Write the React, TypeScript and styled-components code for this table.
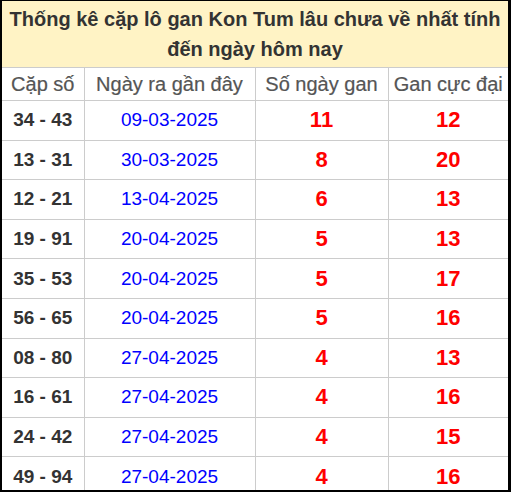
import React from 'react';
import styled, { createGlobalStyle } from 'styled-components';

const GlobalStyle = createGlobalStyle`
  html, body {
    margin: 0;
    padding: 0;
    background: #fff;
  }
  body {
    font-family: "Liberation Sans", Arial, sans-serif;
  }
`;

type Row = {
  pair: string;
  lastDate: string;
  days: number;
  maxGan: number;
};

const rows: Row[] = [
  { pair: '34 - 43', lastDate: '09-03-2025', days: 11, maxGan: 12 },
  { pair: '13 - 31', lastDate: '30-03-2025', days: 8, maxGan: 20 },
  { pair: '12 - 21', lastDate: '13-04-2025', days: 6, maxGan: 13 },
  { pair: '19 - 91', lastDate: '20-04-2025', days: 5, maxGan: 13 },
  { pair: '35 - 53', lastDate: '20-04-2025', days: 5, maxGan: 17 },
  { pair: '56 - 65', lastDate: '20-04-2025', days: 5, maxGan: 16 },
  { pair: '08 - 80', lastDate: '27-04-2025', days: 4, maxGan: 13 },
  { pair: '16 - 61', lastDate: '27-04-2025', days: 4, maxGan: 16 },
  { pair: '24 - 42', lastDate: '27-04-2025', days: 4, maxGan: 15 },
  { pair: '49 - 94', lastDate: '27-04-2025', days: 4, maxGan: 16 },
];

export default function App() {
  return (
    <>
      <GlobalStyle />
      <Frame>
        <Table>
          <colgroup>
            <col style={{ width: 82 }} />
            <col style={{ width: 171 }} />
            <col style={{ width: 133 }} />
            <col />
          </colgroup>
          <thead>
            <tr>
              <Title colSpan={4}>
                Thống kê cặp lô gan Kon Tum lâu chưa về nhất tính đến ngày hôm nay
              </Title>
            </tr>
            <tr>
              <HeadCell>Cặp số</HeadCell>
              <HeadCell>Ngày ra gần đây</HeadCell>
              <HeadCell>Số ngày gan</HeadCell>
              <HeadCell>Gan cực đại</HeadCell>
            </tr>
          </thead>
          <tbody>
            {rows.map((r) => (
              <tr key={r.pair}>
                <PairCell>{r.pair}</PairCell>
                <DateCell>{r.lastDate}</DateCell>
                <CountCell>{r.days}</CountCell>
                <CountCell>{r.maxGan}</CountCell>
              </tr>
            ))}
          </tbody>
        </Table>
      </Frame>
    </>
  );
}

const Frame = styled.div`
  width: 511px;
  height: 492px;
  box-sizing: border-box;
  border-left: 2px solid #000;
  border-top: 1px solid #000;
  border-right: 3px solid #000;
  border-bottom: 2px solid #000;
  overflow: hidden;
  background: #fff;
`;

const Table = styled.table`
  width: 100%;
  border-collapse: collapse;
  table-layout: fixed;

  td,
  th {
    border: 1px solid #cccccc;
    text-align: center;
    padding: 0;
  }

  tr > :first-child {
    border-left: none;
  }
  tr > :last-child {
    border-right: none;
  }
  thead tr:first-child th {
    border-top: none;
  }
`;

const Title = styled.th`
  background: #fff3c5;
  color: #333333;
  font-size: 20px;
  font-weight: bold;
  line-height: 30px;
  height: 66px;
  padding: 0 4px !important;
`;

const HeadCell = styled.th`
  height: 32px;
  color: #555555;
  font-size: 20px;
  font-weight: normal;
  -webkit-text-stroke: 0.2px #555555;
`;

const BodyCell = styled.td`
  height: 38.6px;
`;

const PairCell = styled(BodyCell)`
  color: #333333;
  font-size: 19px;
  font-weight: bold;
`;

const DateCell = styled(BodyCell)`
  color: #0000ff;
  font-size: 19px;
`;

const CountCell = styled(BodyCell)`
  color: #ff0000;
  font-size: 22px;
  font-weight: bold;
`;
